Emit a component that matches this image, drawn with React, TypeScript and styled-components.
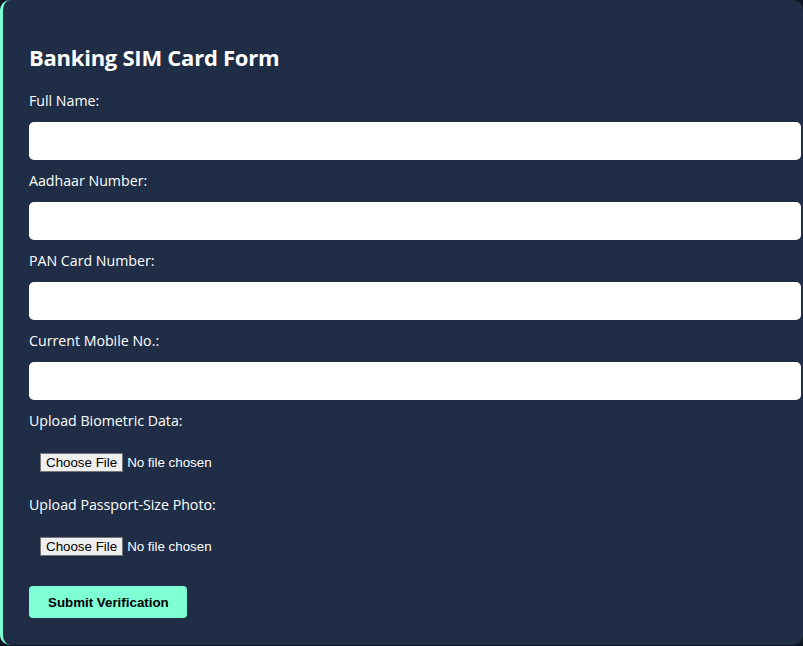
import React from "react";
import styled, { createGlobalStyle } from "styled-components";

const Global = createGlobalStyle`
  html, body { margin: 0; padding: 0; background: #0f1726; }
  body { font-family: "Open Sans", "Noto Sans", sans-serif; }
  * { box-sizing: border-box; }
`;

const Card = styled.form`
  width: 803px;
  height: 645px;
  background: #1f2e46;
  border-left: 3px solid #7fffd4;
  border-radius: 10px;
  padding: 41px 2px 27px 26px;
  display: flex;
  flex-direction: column;
  align-items: flex-start;
  color: #ffffff;
`;

const Title = styled.h2`
  margin: 0 0 18px 0;
  font-size: 22px;
  line-height: 32px;
  font-weight: 700;
  letter-spacing: -0.25px;
  color: #ffffff;
`;

const Label = styled.label`
  display: block;
  font-size: 14.2px;
  line-height: 20px;
  margin-bottom: 11px;
  color: #ffffff;
`;

const TextInput = styled.input`
  display: block;
  width: 100%;
  height: 38px;
  border: none;
  border-radius: 5px;
  background: #ffffff;
  padding: 10px;
  margin: 0 0 11px 0;
  font-size: 14px;
  outline: none;
`;

const FileInput = styled.input`
  display: block;
  padding: 11px 10px 10px 11px;
  margin: 0 0 11px 0;
  height: 42px;
  font-family: "Liberation Sans", Arial, sans-serif;
  font-size: 13.33px;
  color: #ffffff;
  &::file-selector-button {
    font-family: "Liberation Sans", Arial, sans-serif;
    font-size: 13.33px;
    color: #000000;
    background: #efefef;
    border: 1px solid #767676;
    border-radius: 0;
    padding: 1px 5px;
    margin-right: 4px;
  }
`;

const SubmitButton = styled.button`
  margin-top: 7px;
  height: 32px;
  padding: 0 18px 0 19px;
  background: #7fffd4;
  color: #000000;
  border: none;
  border-radius: 4px;
  font-family: "Liberation Sans", Arial, sans-serif;
  font-size: 13.33px;
  font-weight: 700;
  cursor: pointer;
`;

const fields = ["Full Name:", "Aadhaar Number:", "PAN Card Number:", "Current Mobile No.:"];
const uploads = ["Upload Biometric Data:", "Upload Passport-Size Photo:"];

export default function App() {
  return (
    <>
      <Global />
      <Card onSubmit={(e) => e.preventDefault()}>
        <Title>Banking SIM Card Form</Title>
        {fields.map((f) => (
          <React.Fragment key={f}>
            <Label>{f}</Label>
            <TextInput type="text" />
          </React.Fragment>
        ))}
        {uploads.map((u) => (
          <React.Fragment key={u}>
            <Label>{u}</Label>
            <FileInput type="file" />
          </React.Fragment>
        ))}
        <SubmitButton type="submit">Submit Verification</SubmitButton>
      </Card>
    </>
  );
}
